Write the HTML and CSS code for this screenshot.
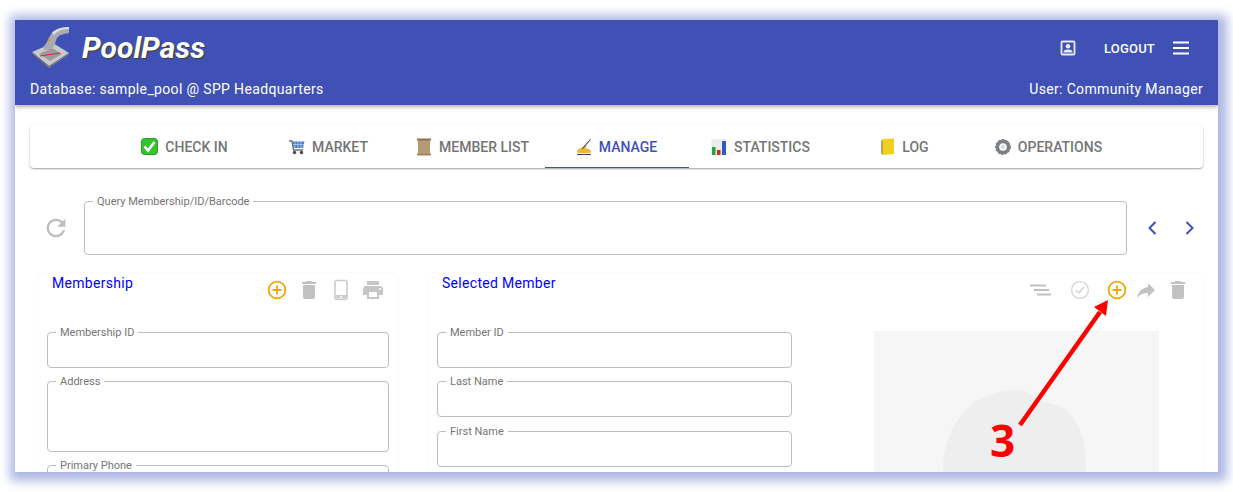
FILE: index.html
```html
<!DOCTYPE html>
<html>
<head>
	<meta charset="UTF-8">
	<title>PoolPass</title>
	<link rel="stylesheet" href="styles.css">
</head>
<body>
	<div class="shot">
		<div class="header">
			<div class="header-top">
				<svg class="logo" width="44" height="44" viewBox="0 0 44 44">
					<path d="M2 27 L23 18 L39 28 L19 41 Z" fill="#c9c9cc"/>
					<path d="M2 27 L19 41 L39 28 L39 29.5 L19 43 L2 28.5 Z" fill="#77787c"/>
					<path d="M9 29 L22 23 L32 29 L20 36 Z" fill="#9a9aa0"/>
					<path d="M10 31 L30 28" stroke="#d8262c" stroke-width="1.2" fill="none"/>
					<path d="M13 22 C17 19 18 13 22 8 C25 4 33 2 39 2 L39 8 C33 9 29 10 27 13 C25 17 25 21 22 24 L14 25 Z" fill="#a9abb0"/>
					<path d="M22 8 C25 4 33 2 39 2 L39 4 C33 4 27 6 24 10 Z" fill="#dcdde0"/>
					<circle cx="19" cy="15" r="1.2" fill="#e8912a"/>
				</svg>
				<div class="title">PoolPass</div>
				<div class="spacer"></div>
				<svg class="contact" width="24" height="24" viewBox="0 0 24 24">
					<rect x="5.5" y="5.5" width="13" height="13" rx="1" fill="none" stroke="#e8eaf6" stroke-width="1.8"/>
					<circle cx="12" cy="10.2" r="2.3" fill="#e8eaf6"/>
					<path d="M7.5 16.5 C7.5 14.2 10 13.6 12 13.6 S16.5 14.2 16.5 16.5 Z" fill="#e8eaf6"/>
				</svg>
				<div class="logout">LOGOUT</div>
				<svg class="menu" width="24" height="24" viewBox="0 0 24 24">
					<path d="M4 6.5h16M4 12h16M4 17.5h16" stroke="#fff" stroke-width="2" fill="none"/>
				</svg>
			</div>
			<div class="header-info">
				<span>Database: sample_pool @ SPP Headquarters</span>
				<span>User: Community Manager</span>
			</div>
		</div>

		<div class="page">
			<div class="tabs">
				<div class="tab">
					<svg width="17" height="17" viewBox="0 0 17 17">
						<rect x="0.5" y="0.5" width="16" height="16" rx="3" fill="#37c22f" stroke="#2a9a22"/>
						<path d="M3.5 8.5 L7 12.5 L13.5 4" stroke="#fff" stroke-width="2.6" fill="none"/>
					</svg>
					<span>Check In</span>
				</div>
				<div class="tab">
					<svg width="16" height="18" viewBox="0 0 16 18">
						<path d="M0 3 H3 L4.5 12 H14" stroke="#6d6f73" stroke-width="1.3" fill="none"/>
						<path d="M3.5 3.5 H15.5 L14 10 H4.5 Z" fill="#4a7fc9"/>
						<path d="M6 4 V10 M9 4 V10 M12 4 V10 M4 6.5 H15" stroke="#b9d2f0" stroke-width="0.7"/>
						<circle cx="5.5" cy="14.5" r="1.7" fill="#4a4a4a"/>
						<circle cx="12.5" cy="14.5" r="1.7" fill="#4a4a4a"/>
					</svg>
					<span>Market</span>
				</div>
				<div class="tab">
					<svg width="16" height="18" viewBox="0 0 16 18">
						<rect x="2" y="1.5" width="12" height="15" fill="#b59a74"/>
						<rect x="1" y="0.5" width="14" height="2" fill="#8c7050"/>
						<rect x="1" y="15.5" width="14" height="2" fill="#a08560"/>
					</svg>
					<span>Member List</span>
				</div>
				<div class="tab active">
					<svg width="16" height="18" viewBox="0 0 16 18">
						<path d="M1 13 C2 11 4 10 6 10 L9 7 L11 8 L9.5 10.5 C11.5 10.5 14 11 15 13 L14 15 H2 Z" fill="#f5b335"/>
						<path d="M1 16.5 H15" stroke="#444" stroke-width="1.1"/>
						<path d="M6 11 L14.5 1.5" stroke="#444" stroke-width="1.1"/>
					</svg>
					<span>Manage</span>
				</div>
				<div class="tab">
					<svg width="16" height="18" viewBox="0 0 16 18">
						<rect x="0.5" y="1" width="15" height="16" fill="#e9edf0"/>
						<rect x="1" y="9" width="3.5" height="8" fill="#2f9e44"/>
						<rect x="6" y="12" width="3.5" height="5" fill="#d5281e"/>
						<rect x="11" y="3" width="4" height="14" fill="#2c5fb8"/>
					</svg>
					<span>Statistics</span>
				</div>
				<div class="tab">
					<svg width="15" height="18" viewBox="0 0 15 18">
						<path d="M2 1 L14 0.5 L14 16 L3 17 L1 15 Z" fill="#f0cf1f"/>
						<path d="M1 2 L3 3 L3 17 L1 15 Z" fill="#b9a35a"/>
					</svg>
					<span>Log</span>
				</div>
				<div class="tab">
					<svg width="16" height="18" viewBox="0 0 16 18">
						<circle cx="8" cy="9" r="5.6" fill="none" stroke="#7d8186" stroke-width="3.6"/>
						<circle cx="8" cy="9" r="7.2" fill="none" stroke="#7d8186" stroke-width="1.4" stroke-dasharray="2 1.6"/>
						<circle cx="8" cy="9" r="2" fill="#d6d8da"/>
					</svg>
					<span>Operations</span>
				</div>
			</div>

			<div class="query-row">
				<svg class="refresh" width="28" height="28" viewBox="0 0 24 24">
					<path d="M17.65 6.35C16.2 4.9 14.21 4 12 4c-4.42 0-7.99 3.58-7.99 8s3.57 8 7.99 8c3.73 0 6.84-2.55 7.73-6h-2.08c-.82 2.33-3.04 4-5.65 4-3.31 0-6-2.69-6-6s2.69-6 6-6c1.66 0 3.14.69 4.22 1.78L13 11h7V4l-2.35 2.35z" fill="#bdbdbd"/>
				</svg>
				<fieldset class="field query">
					<legend>Query Membership/ID/Barcode</legend>
				</fieldset>
				<svg class="chevron" width="24" height="24" viewBox="0 0 24 24">
					<path d="M15.5 6 L9.5 12 L15.5 18" stroke="#3f51b5" stroke-width="2" fill="none"/>
				</svg>
				<svg class="chevron" width="24" height="24" viewBox="0 0 24 24">
					<path d="M9.5 6 L15.5 12 L9.5 18" stroke="#3f51b5" stroke-width="2" fill="none"/>
				</svg>
			</div>

			<div class="cards">
				<div class="card card-membership">
					<div class="card-head">
						<div class="card-title">Membership</div>
						<div class="card-icons">
							<svg width="24" height="24" viewBox="0 0 24 24">
								<circle cx="12" cy="12" r="8.4" fill="none" stroke="#f0a80e" stroke-width="1.8"/>
								<path d="M12 7.5 V16.5 M7.5 12 H16.5" stroke="#f0a80e" stroke-width="1.8"/>
							</svg>
							<svg width="24" height="24" viewBox="0 0 24 24">
								<path d="M6 19c0 1.1.9 2 2 2h8c1.1 0 2-.9 2-2V7H6v12zM19 4h-3.5l-1-1h-5l-1 1H5v2h14V4z" fill="#c2c2c2"/>
							</svg>
							<svg width="24" height="24" viewBox="0 0 24 24">
								<rect x="6" y="2.5" width="12" height="19" rx="2" fill="none" stroke="#cccccc" stroke-width="1.6"/>
								<path d="M6.5 17 H17.5 V20.5 H6.5 Z" fill="#cccccc"/>
								<circle cx="12" cy="19" r="1" fill="#fff"/>
							</svg>
							<svg width="24" height="24" viewBox="0 0 24 24">
								<path d="M19 8H5c-1.66 0-3 1.34-3 3v6h4v4h12v-4h4v-6c0-1.66-1.34-3-3-3zm-3 11H8v-5h8v5zm3-7c-.55 0-1-.45-1-1s.45-1 1-1 1 .45 1 1-.45 1-1 1zm-1-9H6v4h12V3z" fill="#c6c6c6"/>
							</svg>
						</div>
					</div>
					<fieldset class="field"><legend>Membership ID</legend></fieldset>
					<fieldset class="field tall"><legend>Address</legend></fieldset>
					<fieldset class="field"><legend>Primary Phone</legend></fieldset>
				</div>

				<div class="card card-member">
					<div class="card-head">
						<div class="card-title">Selected Member</div>
						<div class="card-icons">
							<svg class="icon-sort" width="24" height="24" viewBox="0 0 24 24">
								<path d="M2 7.5 H18 M6 12 H21 M9 16.5 H23" stroke="#c2c2c2" stroke-width="2" fill="none"/>
							</svg>
							<svg class="icon-check" width="24" height="24" viewBox="0 0 24 24">
								<circle cx="12" cy="12" r="8.4" fill="none" stroke="#d4d4d4" stroke-width="1.4"/>
								<path d="M8 12 L11 15 L16 9" stroke="#d4d4d4" stroke-width="1.4" fill="none"/>
							</svg>
							<svg class="icon-add" width="24" height="24" viewBox="0 0 24 24">
								<circle cx="12" cy="12" r="8.4" fill="none" stroke="#f0a80e" stroke-width="1.8"/>
								<path d="M12 7.5 V16.5 M7.5 12 H16.5" stroke="#f0a80e" stroke-width="1.8"/>
							</svg>
							<svg width="24" height="24" viewBox="0 0 24 24">
								<path d="M14 9V5l7 7-7 7v-4.1c-5 0-8.5 1.6-11 5.1 1-5 4-10 11-11z" fill="#c2c2c2"/>
							</svg>
							<svg width="24" height="24" viewBox="0 0 24 24">
								<path d="M6 19c0 1.1.9 2 2 2h8c1.1 0 2-.9 2-2V7H6v12zM19 4h-3.5l-1-1h-5l-1 1H5v2h14V4z" fill="#c2c2c2"/>
							</svg>
						</div>
					</div>
					<div class="member-body">
						<div class="member-fields">
							<fieldset class="field"><legend>Member ID</legend></fieldset>
							<fieldset class="field"><legend>Last Name</legend></fieldset>
							<fieldset class="field"><legend>First Name</legend></fieldset>
						</div>
						<div class="photo">
							<svg width="285" height="200" viewBox="0 0 285 200">
								<path d="M69 200 V141 C69 89 101 59 143 59 C156 59 161 69 176 72 C201 77 212 99 212 141 V200 Z" fill="#eeeeee"/>
							</svg>
						</div>
					</div>
				</div>
			</div>
		</div>

		<svg class="callout-arrow" width="1203" height="452" viewBox="0 0 1203 452">
			<path d="M1005 405 L1085 292" stroke="#ff0000" stroke-width="4.5" fill="none"/>
			<path d="M1093 280 L1091 296 L1079 287 Z" fill="#ff0000"/>
		</svg>
		<div class="callout-num">3</div>
	</div>
</body>
</html>
```

FILE: styles.css
```css
html, body {
	margin: 0;
	height: 492px;
	overflow: hidden;
	background: #fff;
}
body {
	font-family: Roboto, "Liberation Sans", sans-serif;
	padding: 20px 15px;
	box-sizing: border-box;
}
svg {
	display: block;
	flex: none;
}
.shot {
	position: relative;
	width: 1203px;
	height: 452px;
	overflow: hidden;
	background: #fff;
	box-shadow: 2px 2px 10px 7px #aeb7e2;
}

/* header */
.header {
	height: 85px;
	background: #3f51b5;
	color: #fff;
	box-shadow: 0 2px 4px rgba(0,0,0,.3);
	position: relative;
	display: flex;
	flex-direction: column;
	padding: 5px 15px 0;
	box-sizing: border-box;
}
.header-top {
	display: flex;
	align-items: center;
	height: 44px;
}
.title {
	font-size: 30px;
	font-weight: 700;
	font-style: italic;
	margin-left: 8px;
	text-shadow: 1px 1px 1px #4a3a20;
}
.spacer {
	flex: 1;
}
.contact {
	margin: 2px 24px 0 0;
}
.logout {
	font-size: 13px;
	font-weight: 500;
	letter-spacing: .2px;
	margin-right: 14px;
	padding-top: 2px;
}
.menu {
	margin: 2px 10px 0 0;
}
.header-info {
	display: flex;
	justify-content: space-between;
	font-size: 14px;
	letter-spacing: .35px;
	margin-top: 12px;
}

/* tabs */
.page {
	padding: 20px 15px 0;
}
.tabs {
	display: flex;
	justify-content: center;
	height: 43px;
	background: #fff;
	border-radius: 4px;
	box-shadow: 0 1px 2px rgba(0,0,0,.38);
}
.tab {
	width: 144px;
	height: 43px;
	box-sizing: border-box;
	display: flex;
	align-items: center;
	justify-content: center;
	gap: 7px;
	font-size: 14px;
	font-weight: 500;
	color: #757575;
	text-transform: uppercase;
}
.tab.active {
	color: #3f51b5;
	border-bottom: 1px solid #3f51b5;
	padding-top: 1px;
}

/* outlined fields */
.field {
	margin: 0;
	padding: 0;
	min-width: 0;
	height: 43px;
	box-sizing: border-box;
	border: 1px solid #bdbdbd;
	border-radius: 4px;
}
.field legend {
	margin-left: 8px;
	padding: 2px 4px 0;
	font-size: 11px;
	line-height: 12px;
	color: #757575;
}
.field.tall {
	height: 78px;
}

/* query */
.query-row {
	display: flex;
	align-items: center;
	margin: 26px 2px 0 0;
}
.refresh {
	margin: 6px 14px 0 12px;
}
.query {
	flex: 1;
	height: 61px;
}
.chevron {
	margin: 6px 0 0 13px;
}

/* cards */
.cards {
	display: flex;
	gap: 30px;
	margin-top: 18px;
	padding-left: 8px;
}
.card {
	height: 260px;
	border-radius: 6px;
	box-shadow: 0 0 2px rgba(0,0,0,.07);
	padding: 0 9px;
	box-sizing: border-box;
}
.card-membership {
	width: 360px;
}
.card-member {
	flex: 1;
}
.card-head {
	display: flex;
	justify-content: space-between;
	height: 52px;
}
.card-title {
	font-size: 14px;
	letter-spacing: .3px;
	color: #0000ff;
	margin: 2px 0 0 5px;
	line-height: 16px;
}
.card-icons {
	display: flex;
	gap: 8px;
	margin: 5px 4px 0 0;
}
.icon-sort {
	margin-right: 8px;
}
.icon-check {
	margin-right: 5px;
}
.icon-add {
	margin-right: -3px;
}
.card .field + .field {
	margin-top: 6px;
}
.member-body {
	display: flex;
}
.member-fields {
	width: 355px;
}
.card .member-fields .field:last-child {
	margin-top: 7px;
}
.photo {
	width: 285px;
	height: 200px;
	margin: 6px 0 0 82px;
	background: #f6f6f6;
}

/* annotation on top of the screenshot */
.callout-arrow {
	position: absolute;
	left: 0;
	top: 0;
}
.callout-num {
	position: absolute;
	left: 975px;
	top: 390px;
	font-family: "Open Sans", sans-serif;
	font-size: 44px;
	line-height: 60px;
	font-weight: 700;
	color: #ff0000;
}
```
